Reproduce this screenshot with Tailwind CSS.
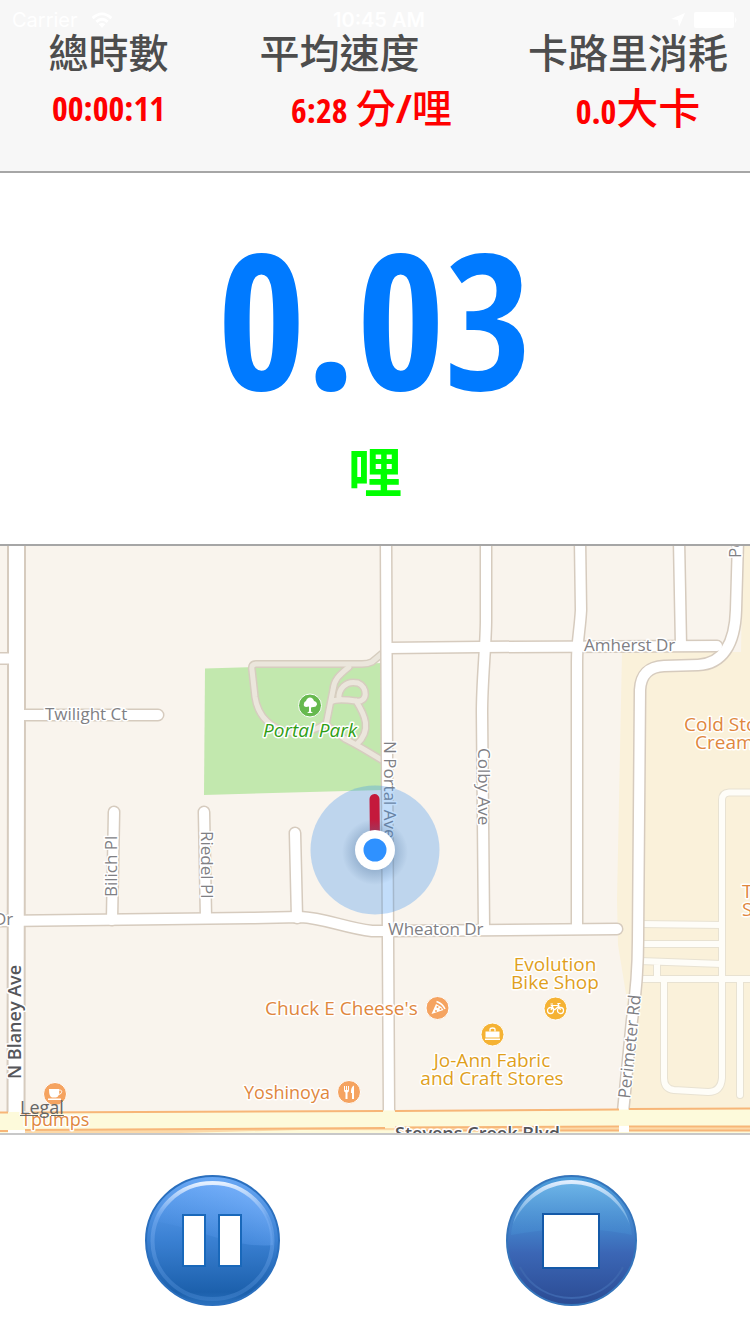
<!DOCTYPE html>
<html lang="zh-Hant">
<head>
  <meta charset="UTF-8"/>
  <meta name="viewport" content="width=device-width, initial-scale=1.0"/>
  <title>跑步記錄</title>
  <script src="https://cdn.jsdelivr.net/npm/@tailwindcss/browser@4"></script>
</head>
<body class="min-h-screen flex flex-col bg-white font-['DIN_Condensed','Noto_Sans_ExtraCondensed','Open_Sans_Condensed','Noto_Sans_Condensed','Roboto_Condensed','Liberation_Sans','Noto_Sans_CJK_TC',sans-serif]">

  <header class="relative bg-[#f7f7f7] border-b-2 border-[#a6a6a6] pt-[27px] pb-[31px]">
    <!-- Status bar, white over the light header -->
    <div class="absolute inset-x-0 top-0 h-10 px-3 grid grid-cols-3 items-center text-white text-xl leading-10 font-['Inter','Liberation_Sans',sans-serif]">
      <div class="flex items-center gap-3">
        <span>Carrier</span>
        <svg class="w-6 h-4" viewBox="0 0 24 17" fill="none" stroke="currentColor" stroke-width="3">
          <path d="M2 6.500Q12 -2.500 22 6.500M6 10.500Q12 5 18 10.500"/>
          <path d="M12 17L8.500 13Q12 10.200 15.500 13Z" fill="currentColor" stroke="none"/>
        </svg>
      </div>
      <span class="text-center font-semibold pl-2">10:45 AM</span>
      <div class="flex items-center justify-end gap-2">
        <svg class="w-4 h-4" viewBox="0 0 16 16" fill="currentColor"><path d="M15 1L9 15L8 8L1 7Z"/></svg>
        <svg class="w-11 h-4" viewBox="0 0 44 16" fill="currentColor"><rect width="40" height="16" rx="2"/><path d="M41 5Q44 8 41 11Z"/></svg>
      </div>
    </div>

    <dl class="relative grid grid-cols-[217fr_277fr_256fr] text-center whitespace-nowrap">
      <div>
        <dt class="text-[40px] leading-[52px] font-medium text-[#4d4d4d]">總時數</dt>
        <dd class="text-[34px] leading-[58px] font-bold text-[#ff0000]">00:00:11</dd>
      </div>
      <div>
        <dt class="pr-8 text-[40px] leading-[52px] font-medium text-[#4d4d4d]">平均速度</dt>
        <dd class="pl-8 text-[34px] leading-[58px] font-bold text-[#ff0000]">6:28 <span class="text-[40px] font-medium">分/哩</span></dd>
      </div>
      <div>
        <dt class="pl-3 text-[40px] leading-[52px] font-medium text-[#4d4d4d]">卡路里消耗</dt>
        <dd class="pl-8 text-[34px] leading-[58px] font-bold text-[#ff0000]">0.0<span class="text-[42px] font-medium">大卡</span></dd>
      </div>
    </dl>
  </header>

  <section class="flex flex-col items-center pt-10 pb-[21px] border-b-2 border-[#a6a6a6]">
    <p class="text-[190px] leading-[208px] font-bold text-[#007aff]">0.03</p>
    <p class="text-[54px] leading-[102px] font-bold text-[#00ff00]">哩</p>
  </section>

  <main class="relative grow basis-[588px] min-h-0 border-b-2 border-[#c8c8c8]">
    <svg class="absolute inset-0 w-full h-full font-['Open_Sans','Noto_Sans',sans-serif]" viewBox="0 546 750 587" preserveAspectRatio="xMidYMid slice" role="img" aria-label="Map">
      <defs>
        <radialGradient id="dotShadow">
          <stop offset="0.5" stop-color="#5478a0" stop-opacity="0.4"/>
          <stop offset="1" stop-color="#5478a0" stop-opacity="0"/>
        </radialGradient>
        <g id="serviceRoads">
          <path d="M760 792.500H729Q722 793 722 800V1078Q721 1092 708 1092L674 1090Q664 1089 664 1078V979"/>
          <path d="M640 924L722 925M640 944H722M640 961L722 964M657 962V979M638 979H760M740 979V1095"/>
        </g>
        <g id="roads">
          <path d="M-6 658.500H16M16 715H158"/>
          <path d="M114 812L112 920M204 812L206 918M295 833L297 918"/>
          <path d="M-6 921L250 918L300 917C325 918 345 928 372 931H390L617 929"/>
          <path d="M386 540L387 760L388 940L389 1111"/>
          <path d="M387 648L480 647L717 646M679 540L681 646"/>
          <path d="M486 540V620C486 645 482 680 482 712L484 928"/>
          <path d="M580 540L581 610C580 630 577 640 577 662V928"/>
          <path d="M738 540L736 610C735 645 722 664 698 665L664 666Q641 667 640 690L638 940Q638 980 632 1020L623 1112"/>
        </g>
        <g id="parkPaths">
          <path d="M384 652L372 662Q368 664 362 664H256Q251 664 252 670L255 697C258 717 272 730 292 733Q312 733 325 724L345 739Q354 743 385 762"/>
          <path d="M349 667C338 676 334 680 333 690L326 725M331 702Q336 698 356 701C368 703 368 687 358 683C345 680 338 690 339 699M356 701C365 715 372 730 357 744"/>
        </g>
      </defs>

      <!-- Ground -->
      <rect y="540" width="750" height="600" fill="#f9f4ed"/>
      <path d="M743 540H760V1112H622L627 1000L618 945L617 900L622 652H741Z" fill="#faf1da"/>
      <path d="M205 668.500L383 663L384 790L204 795Z" fill="#c2e8ae"/>

      <!-- Streets: each set drawn twice, casing then fill -->
      <g fill="none" stroke-linecap="round" stroke-linejoin="round">
        <use href="#parkPaths" stroke="#d6cdbf" stroke-width="8"/>
        <use href="#parkPaths" stroke="#ebe6dc" stroke-width="5"/>
        <use href="#serviceRoads" stroke="#e8e2d2" stroke-width="8"/>
        <use href="#serviceRoads" stroke="#fefdf8" stroke-width="6"/>
        <use href="#roads" stroke="#d6cbbe" stroke-width="13"/>
        <path d="M16.500 540V700L16 1140" stroke="#d6cbbe" stroke-width="19"/>
        <use href="#roads" stroke="#ffffff" stroke-width="10"/>
        <path d="M16.500 540V700L16 1140" stroke="#ffffff" stroke-width="15"/>
      </g>

      <!-- Stevens Creek Blvd -->
      <path d="M0 1112L750 1109V1140H0Z" fill="#fdfadb"/>
      <path d="M25 1130L380 1128L750 1127V1131L300 1130L140 1134H25Z" fill="#fcd9a8"/>
      <path d="M0 1112.500H8M25 1112.500L383 1111M395 1111L619 1109.500M629 1109L750 1108.500M0 1131H8M25 1130L385 1128M395 1127.500L619 1126.500M629 1126.500H750M395 1130.500H619M629 1130.500H750" fill="none" stroke="#f7b678" stroke-width="2"/>
      <path d="M8 1130H25V1136H8ZM619 1126H629V1132H619Z" fill="#ffffff"/>

      <!-- Street names -->
      <g font-size="17" fill="#7f8084" stroke="#ffffff" stroke-width="3" stroke-linejoin="round" paint-order="stroke">
        <text x="45" y="720">Twilight Ct</text>
        <text x="584" y="651">Amherst Dr</text>
        <text x="388" y="935">Wheaton Dr</text>
        <text x="-6" y="925">Dr</text>
        <text transform="translate(117 897) rotate(-90)">Bilich Pl</text>
        <text transform="translate(201 831) rotate(90)">Riedel Pl</text>
        <text transform="translate(384 741) rotate(90)">N Portal Ave</text>
        <text transform="translate(478 748) rotate(90)">Colby Ave</text>
        <text transform="translate(630 1099) rotate(-84)">Perimeter Rd</text>
        <text transform="translate(741 558) rotate(-90)">Perimeter Rd</text>
        <g font-size="18" font-weight="600" fill="#55565a">
          <text transform="translate(21 1079) rotate(-90)">N Blaney Ave</text>
          <text x="395" y="1140">Stevens Creek Blvd</text>
        </g>
      </g>

      <!-- Places -->
      <g font-size="19" fill="#e0873e" stroke="#ffffff" stroke-width="3" stroke-linejoin="round" paint-order="stroke">
        <text x="265" y="1015">Chuck E Cheese's</text>
        <text x="244" y="1099" font-size="18">Yoshinoya</text>
        <text x="21" y="1126" font-size="18">Tpumps</text>
        <text x="684" y="731">Cold Stone</text>
        <text x="695" y="749">Creamery</text>
        <text x="742" y="898">TGI</text>
        <text x="742" y="916">Sushi</text>
        <text x="310" y="737" text-anchor="middle" font-style="italic" fill="#2f9e14">Portal Park</text>
        <g fill="#dfa01c" text-anchor="middle">
          <text x="555" y="971">Evolution</text>
          <text x="555" y="989">Bike Shop</text>
          <text x="492" y="1067">Jo-Ann Fabric</text>
          <text x="492" y="1085">and Craft Stores</text>
        </g>
      </g>

      <!-- Tree -->
      <g transform="translate(310 705.500)">
        <circle r="11.500" fill="#66b94e" stroke="#ffffff" stroke-width="1"/>
        <path d="M-1 1L-4 1.500Q-7 1 -6 -2Q-6 -4 -4 -4.500Q-3 -8 0 -8Q3 -8 4 -4.500Q7 -4 7 -1Q6 2 3 1.500L1 2V6L3 7.500H-3L-1 6Z" fill="#ffffff"/>
      </g>
      <!-- Pizza slice -->
      <g transform="translate(437.500 1008)">
        <circle r="11.500" fill="#f5a360" stroke="#ffffff" stroke-width="1"/>
        <path d="M-6 6L-1.500 -4Q3.500 -2 6 2Z" fill="#ffffff"/>
        <path d="M-1 -6.500Q5 -4.500 7.500 1" fill="none" stroke="#ffffff" stroke-width="1.500"/>
        <g fill="#f5a360"><circle cx="0" cy="-1" r="1"/><circle cx="-1.500" cy="3" r="1"/><circle cx="3" cy="1" r="1"/></g>
      </g>
      <!-- Fork and knife -->
      <g transform="translate(349 1092)">
        <circle r="11.500" fill="#f5a360" stroke="#ffffff" stroke-width="1"/>
        <path d="M-5 -6V-2Q-5 0 -3.500 0.500V7H-1.500V0.500Q0 0 0 -2V-6H-1V-2H-2V-6H-3V-2H-4V-6ZM2 1Q1.500 -5 5 -6.500V7H3V1Z" fill="#ffffff"/>
      </g>
      <!-- Cup -->
      <g transform="translate(55 1094)">
        <circle r="11.500" fill="#f5a360" stroke="#ffffff" stroke-width="1"/>
        <path d="M-6 -5H4Q5 3 1 3.500H-3Q-6 3 -6 -5ZM-7 4.500H6V6H-7Z" fill="#ffffff"/>
        <path d="M4 -4Q7.500 -4 6.500 -1.500Q6 0.500 3 0.500" fill="none" stroke="#ffffff" stroke-width="1"/>
      </g>
      <!-- Bicycle -->
      <g transform="translate(555.500 1008.500)">
        <circle r="11.500" fill="#f5b233" stroke="#ffffff" stroke-width="1"/>
        <path d="M-1 1.500L-4 -3H3L5 1.500M-4.500 1.500L-2.500 -3M-1 1.500L3.500 -2.500L2.500 -5H5M-5 -4.500H-2.500" fill="none" stroke="#ffffff" stroke-width="1.200"/>
        <g fill="none" stroke="#ffffff" stroke-width="1.300"><circle cx="-5" cy="2" r="3"/><circle cx="5" cy="2" r="3"/></g>
      </g>
      <!-- Briefcase -->
      <g transform="translate(492.500 1034.500)">
        <circle r="11.500" fill="#f5b233" stroke="#ffffff" stroke-width="1"/>
        <path d="M-7 -3H7V3H-7ZM-7.500 4H7.500V5.500H-7.500Z" fill="#ffffff"/>
        <path d="M-2.500 -3V-5Q-2.500 -6.500 0 -6.500Q2.500 -6.500 2.500 -5V-3" fill="none" stroke="#ffffff" stroke-width="1.300"/>
      </g>

      <!-- Route and current position -->
      <circle cx="375" cy="850" r="64.500" fill="#348eef" fill-opacity="0.3"/>
      <path d="M374.500 799L375 845" stroke="#c4193c" stroke-width="10" stroke-linecap="round"/>
      <circle cx="375" cy="852" r="33" fill="url(#dotShadow)"/>
      <circle cx="375" cy="850" r="20" fill="#ffffff"/>
      <circle cx="375" cy="850" r="11.500" fill="#2f91ff"/>
    </svg>
    <a href="#legal" class="absolute left-5 bottom-4 text-lg leading-5 text-[#666666] underline font-['Open_Sans','Noto_Sans',sans-serif]">Legal</a>
  </main>

  <footer class="flex justify-between pl-[145px] pr-[113px] pt-10 pb-7">
    <button type="button" aria-label="Pause" class="cursor-pointer">
      <svg class="w-[135px] h-[131px]" viewBox="0 0 135 131">
        <defs>
          <linearGradient id="pauseFill" x2="0" y2="1">
            <stop offset="0" stop-color="#69a8f5"/>
            <stop offset="0.5" stop-color="#3a80d2"/>
            <stop offset="0.9" stop-color="#1c60ac"/>
            <stop offset="1" stop-color="#2b71bd"/>
          </linearGradient>
          <linearGradient id="pauseGloss" x1="0" y1="1" x2="1" y2="0">
            <stop offset="0.2" stop-color="#5a9df2" stop-opacity="0.1"/>
            <stop offset="0.9" stop-color="#82b8ff" stop-opacity="0.7"/>
          </linearGradient>
          <linearGradient id="pauseRim" x2="0" y2="1">
            <stop offset="0" stop-color="#e4f0ff"/>
            <stop offset="0.3" stop-color="#7fb2f4" stop-opacity="0.5"/>
            <stop offset="1" stop-color="#4c8bd5" stop-opacity="0.4"/>
          </linearGradient>
        </defs>
        <ellipse cx="67.500" cy="65.500" rx="66.500" ry="64.500" fill="url(#pauseFill)" stroke="#2a6fbe" stroke-width="2"/>
        <path d="M9 46C15 22 40 7 67 7C102 7 128 35 128 70C90 74 52 53 9 46Z" fill="url(#pauseGloss)"/>
        <ellipse cx="67.500" cy="66" rx="60" ry="58" fill="none" stroke="url(#pauseRim)" stroke-width="4"/>
        <path d="M38 40H60V91H38ZM74 40H96V91H74Z" fill="#ffffff" stroke="#1968ba" stroke-width="2"/>
      </svg>
    </button>
    <button type="button" aria-label="Stop" class="cursor-pointer">
      <svg class="w-[131px] h-[131px]" viewBox="0 0 131 131">
        <defs>
          <linearGradient id="stopFill" x2="0" y2="1">
            <stop offset="0" stop-color="#4b9ddb"/>
            <stop offset="0.42" stop-color="#427fc8"/>
            <stop offset="0.6" stop-color="#3b66b5"/>
            <stop offset="1" stop-color="#2b4b93"/>
          </linearGradient>
          <linearGradient id="stopGloss" x2="0" y2="1">
            <stop offset="0" stop-color="#70b7e8"/>
            <stop offset="1" stop-color="#4589cf" stop-opacity="0.5"/>
          </linearGradient>
          <linearGradient id="stopRim" x2="0" y2="1">
            <stop offset="0" stop-color="#e6f1ff"/>
            <stop offset="1" stop-color="#78b4e6" stop-opacity="0.5"/>
          </linearGradient>
        </defs>
        <circle cx="65.500" cy="65.500" r="64.500" fill="url(#stopFill)" stroke="#3474bb" stroke-width="2"/>
        <path d="M5 60C8 27 34 6 65.500 6S123 27 126 60C90 52 45 52 5 60Z" fill="url(#stopGloss)"/>
        <path d="M7 49C14 22 38 5 65.500 5S117 22 124 50C114 26 92 9 65.500 9S17 27 7 49Z" fill="url(#stopRim)"/>
        <path d="M14 92C24 112 44 123 65.500 123S107 112 117 92" fill="none" stroke="#3d66ae" stroke-width="2"/>
        <rect x="37" y="39" width="56" height="54" fill="#ffffff" stroke="#1459a8" stroke-width="2"/>
      </svg>
    </button>
  </footer>
</body>
</html>
